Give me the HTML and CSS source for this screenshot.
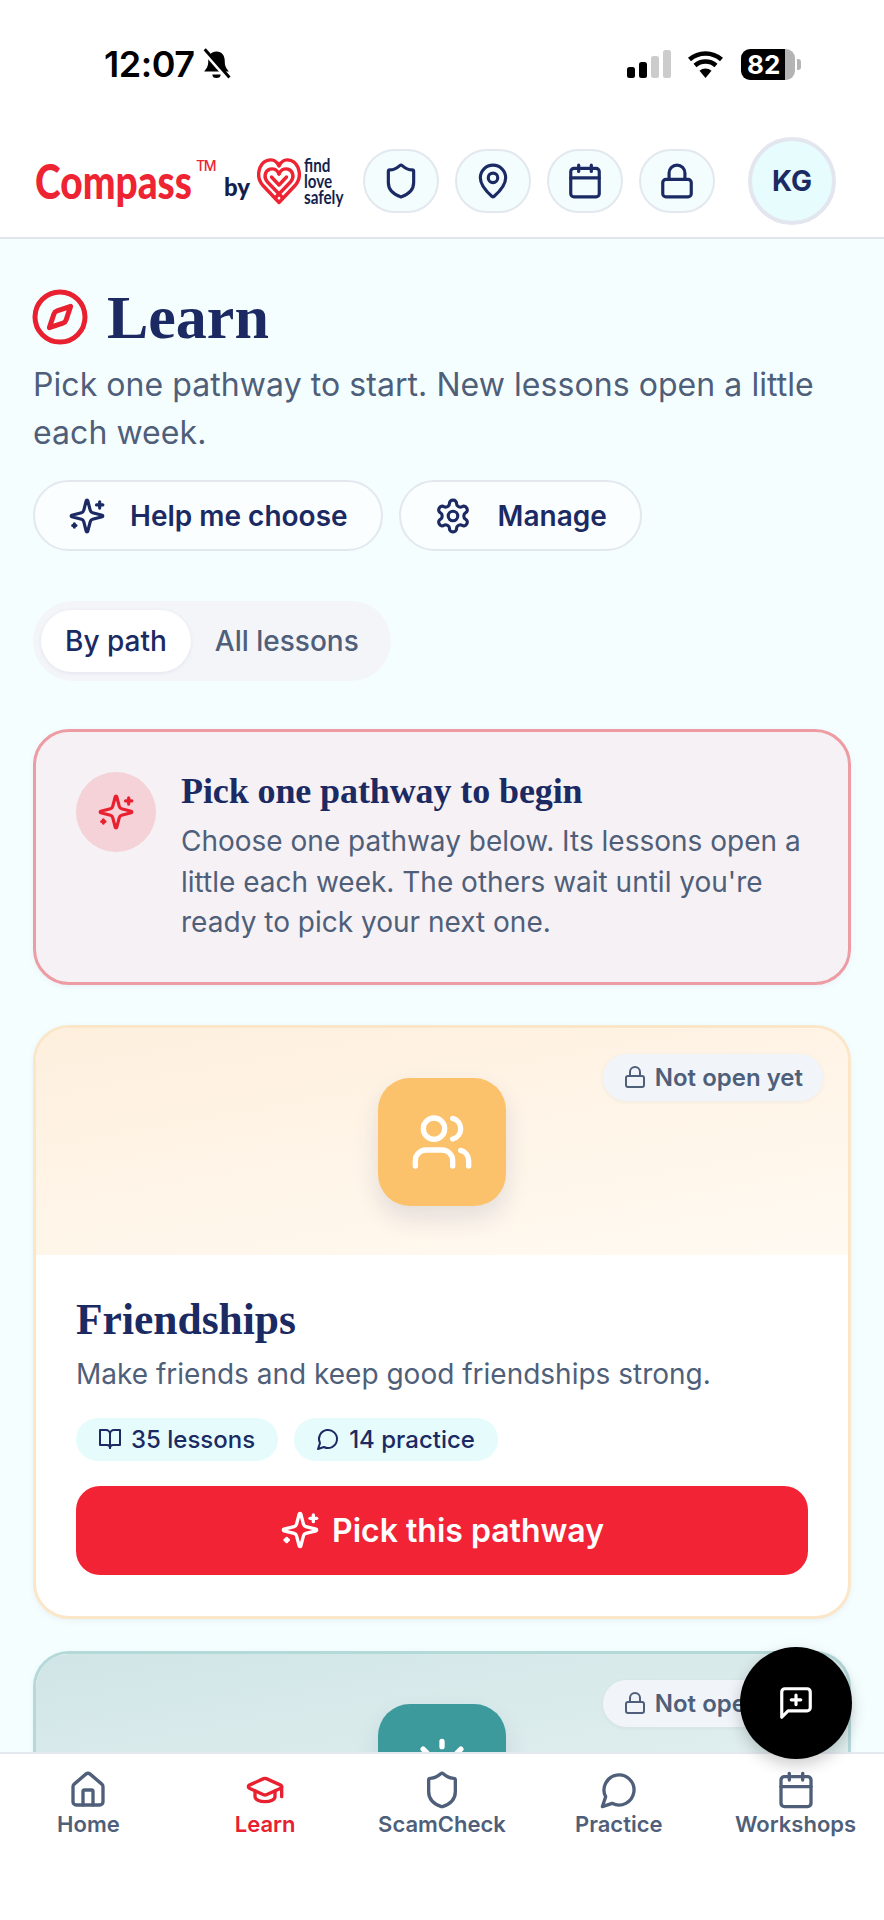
FILE: index.html
```html
<!DOCTYPE html>
<html lang="en">
<head>
    <meta charset="UTF-8">
    <meta name="viewport" content="width=device-width, initial-scale=1.0">
    <title>Compass - Learn</title>
    <link rel="stylesheet" href="styles.css">
</head>
<body>
    <!-- icon sprite -->
    <svg class="sprite" xmlns="http://www.w3.org/2000/svg">
        <symbol id="i-shield" viewBox="0 0 24 24"><path d="M20 13c0 5-3.5 7.5-7.66 8.95a1 1 0 0 1-.67-.01C7.5 20.5 4 18 4 13V6a1 1 0 0 1 1-1c2 0 4.5-1.2 6.24-2.72a1.17 1.17 0 0 1 1.52 0C14.51 3.81 17 5 19 5a1 1 0 0 1 1 1z"/></symbol>
        <symbol id="i-pin" viewBox="0 0 24 24"><path d="M20 10c0 4.993-5.539 10.193-7.399 11.799a1 1 0 0 1-1.202 0C9.539 20.193 4 14.993 4 10a8 8 0 0 1 16 0"/><circle cx="12" cy="10" r="3"/></symbol>
        <symbol id="i-calendar" viewBox="0 0 24 24"><path d="M8 2v4"/><path d="M16 2v4"/><rect x="3" y="4" width="18" height="18" rx="2"/><path d="M3 10h18"/></symbol>
        <symbol id="i-lock" viewBox="0 0 24 24"><rect x="3" y="11" width="18" height="11" rx="2"/><path d="M7 11V7a5 5 0 0 1 10 0v4"/></symbol>
        <symbol id="i-sparkles" viewBox="0 0 24 24"><path d="M9.937 15.5A2 2 0 0 0 8.5 14.063l-6.135-1.582a.5.5 0 0 1 0-.962L8.5 9.936A2 2 0 0 0 9.937 8.5l1.582-6.135a.5.5 0 0 1 .963 0L14.063 8.5A2 2 0 0 0 15.5 9.937l6.135 1.581a.5.5 0 0 1 0 .964L15.5 14.063a2 2 0 0 0-1.437 1.437l-1.582 6.135a.5.5 0 0 1-.963 0z"/><path d="M20 3v4"/><path d="M22 5h-4"/><path d="M4 17v2"/><path d="M5 18H3"/></symbol>
        <symbol id="i-message" viewBox="0 0 24 24"><path d="M7.9 20A9 9 0 1 0 4 16.1L2 22Z"/></symbol>
    </svg>

    <div class="phone">
        <div class="status-bar">
            <div class="status-left">
                <span class="time">12:07</span>
                <svg class="bell" viewBox="0 0 28 28">
                    <path d="M14 3c-4.500 0-7 3.500-7 8 0 4-1 6-3.500 9h21C22 17 21 15 21 11c0-4.500-2.500-8-7-8z"/>
                    <path d="M10.500 22.500a3.500 3 0 0 0 7 0z"/>
                    <path d="M3 2l21 24" class="bell-gap"/>
                    <path d="M4 1l21 24" class="bell-slash"/>
                </svg>
            </div>
            <div class="status-right">
                <div class="signal">
                    <span class="bar bar-1"></span>
                    <span class="bar bar-2"></span>
                    <span class="bar bar-3"></span>
                    <span class="bar bar-4"></span>
                </div>
                <svg class="wifi" viewBox="0 0 37 28">
                    <path d="M18.500 28l-6-7.200a9 9 0 0 1 12 0z"/>
                    <path d="M2.500 9.500a24 24 0 0 1 32 0M8 15.500a16 16 0 0 1 21 0" class="wifi-arc"/>
                </svg>
                <div class="battery"><span>82</span></div>
            </div>
        </div>

        <header class="top-bar">
            <div class="logo">
                <span class="logo-name">Compass</span>
                <span class="logo-tm">TM</span>
                <span class="logo-by">by</span>
                <svg class="logo-heart" viewBox="0 0 44 48">
                    <path d="M22 45.500L5.500 28C-1 20.500 1 7 10 3.500 15.500 1.500 20 4.500 22 9c2-4.500 6.500-7.500 12-5.500 9 3.500 11 17 4.500 24.500z"/>
                    <path d="M22 17c-1.500-3.500-5-6-9-4.800C7.500 14 6.500 20.500 10.500 25L25 40"/>
                    <path d="M22 17c1.500-3.500 5-6 9-4.800 5.500 1.800 6.500 8.300 2.500 12.800L19 40"/>
                    <path d="M14.500 20l7.500 8 7.500-8"/>
                </svg>
                <span class="logo-tag">find<br>love<br>safely</span>
            </div>
            <div class="top-icons">
                <a class="icon-pill"><svg class="icon"><use href="#i-shield"/></svg></a>
                <a class="icon-pill"><svg class="icon"><use href="#i-pin"/></svg></a>
                <a class="icon-pill"><svg class="icon"><use href="#i-calendar"/></svg></a>
                <a class="icon-pill"><svg class="icon"><use href="#i-lock"/></svg></a>
            </div>
            <div class="avatar">KG</div>
        </header>

        <main class="content">
            <div class="page-title">
                <svg class="compass-icon" viewBox="0 0 24 24">
                    <circle cx="12" cy="12" r="10"/>
                    <path d="M16.240 7.760l-1.804 5.411a2 2 0 0 1-1.265 1.265L7.760 16.240l1.804-5.411a2 2 0 0 1 1.265-1.265z"/>
                </svg>
                <h1>Learn</h1>
            </div>
            <p class="intro">Pick one pathway to start. New lessons open a little each week.</p>

            <div class="action-row">
                <button class="action-btn"><svg class="icon"><use href="#i-sparkles"/></svg>Help me choose</button>
                <button class="action-btn manage">
                    <svg class="icon" viewBox="0 0 24 24">
                        <path d="M12.220 2h-.44a2 2 0 0 0-2 2v.18a2 2 0 0 1-1 1.730l-.43.25a2 2 0 0 1-2 0l-.15-.08a2 2 0 0 0-2.730.73l-.22.38a2 2 0 0 0 .73 2.730l.15.1a2 2 0 0 1 1 1.720v.51a2 2 0 0 1-1 1.740l-.15.09a2 2 0 0 0-.73 2.730l.22.38a2 2 0 0 0 2.730.73l.15-.08a2 2 0 0 1 2 0l.43.25a2 2 0 0 1 1 1.730V20a2 2 0 0 0 2 2h.44a2 2 0 0 0 2-2v-.18a2 2 0 0 1 1-1.730l.43-.25a2 2 0 0 1 2 0l.15.08a2 2 0 0 0 2.730-.73l.22-.39a2 2 0 0 0-.73-2.730l-.15-.08a2 2 0 0 1-1-1.740v-.5a2 2 0 0 1 1-1.740l.15-.09a2 2 0 0 0 .73-2.730l-.22-.38a2 2 0 0 0-2.730-.73l-.15.08a2 2 0 0 1-2 0l-.43-.25a2 2 0 0 1-1-1.730V4a2 2 0 0 0-2-2z"/>
                        <circle cx="12" cy="12" r="3"/>
                    </svg>Manage
                </button>
            </div>

            <div class="view-tabs">
                <span class="tab active">By path</span>
                <span class="tab">All lessons</span>
            </div>

            <section class="notice">
                <div class="notice-icon"><svg class="icon"><use href="#i-sparkles"/></svg></div>
                <div>
                    <h3>Pick one pathway to begin</h3>
                    <p>Choose one pathway below. Its lessons open a little each week. The others wait until you're ready to pick your next one.</p>
                </div>
            </section>

            <section class="path-card friendships">
                <div class="path-hero">
                    <span class="lock-badge"><svg class="icon"><use href="#i-lock"/></svg>Not open yet</span>
                    <div class="path-icon">
                        <svg class="icon" viewBox="0 0 24 24">
                            <path d="M16 21v-2a4 4 0 0 0-4-4H6a4 4 0 0 0-4 4v2"/>
                            <circle cx="9" cy="7" r="4"/>
                            <path d="M22 21v-2a4 4 0 0 0-3-3.870"/>
                            <path d="M16 3.130a4 4 0 0 1 0 7.750"/>
                        </svg>
                    </div>
                </div>
                <div class="path-body">
                    <h2>Friendships</h2>
                    <p>Make friends and keep good friendships strong.</p>
                    <div class="chips">
                        <span class="chip">
                            <svg class="icon" viewBox="0 0 24 24">
                                <path d="M2 3h6a4 4 0 0 1 4 4v14a3 3 0 0 0-3-3H2z"/>
                                <path d="M22 3h-6a4 4 0 0 0-4 4v14a3 3 0 0 1 3-3h7z"/>
                            </svg>35 lessons
                        </span>
                        <span class="chip"><svg class="icon"><use href="#i-message"/></svg>14 practice</span>
                    </div>
                    <button class="pick-btn"><svg class="icon"><use href="#i-sparkles"/></svg>Pick this pathway</button>
                </div>
            </section>

            <section class="path-card wellbeing">
                <div class="path-hero">
                    <span class="lock-badge"><svg class="icon"><use href="#i-lock"/></svg>Not open yet</span>
                    <div class="path-icon">
                        <svg class="icon" viewBox="0 0 24 24">
                            <circle cx="12" cy="12" r="4"/>
                            <path d="M12 2v2M12 20v2M4.930 4.930l1.410 1.410M17.660 17.660l1.410 1.410M2 12h2M20 12h2M6.340 17.660l-1.410 1.410M19.070 4.930l-1.410 1.410"/>
                        </svg>
                    </div>
                </div>
            </section>
        </main>

        <button class="fab">
            <svg class="icon" viewBox="0 0 24 24">
                <path d="M21 15a2 2 0 0 1-2 2H7l-4 4V5a2 2 0 0 1 2-2h14a2 2 0 0 1 2 2z"/>
                <path d="M12 7v6"/>
                <path d="M9 10h6"/>
            </svg>
        </button>

        <nav class="bottom-nav">
            <a class="nav-item">
                <svg class="icon" viewBox="0 0 24 24">
                    <path d="M15 21v-8a1 1 0 0 0-1-1h-4a1 1 0 0 0-1 1v8"/>
                    <path d="M3 10a2 2 0 0 1 .709-1.528l7-5.999a2 2 0 0 1 2.582 0l7 5.999A2 2 0 0 1 21 10v9a2 2 0 0 1-2 2H5a2 2 0 0 1-2-2z"/>
                </svg>
                Home
            </a>
            <a class="nav-item current">
                <svg class="icon" viewBox="0 0 24 24">
                    <path d="M21.420 10.922a1 1 0 0 0-.019-1.838L12.830 5.180a2 2 0 0 0-1.660 0L2.600 9.080a1 1 0 0 0 0 1.832l8.570 3.908a2 2 0 0 0 1.660 0z"/>
                    <path d="M22 10v6"/>
                    <path d="M6 12.500V16a6 3 0 0 0 12 0v-3.500"/>
                </svg>
                Learn
            </a>
            <a class="nav-item"><svg class="icon"><use href="#i-shield"/></svg>ScamCheck</a>
            <a class="nav-item"><svg class="icon"><use href="#i-message"/></svg>Practice</a>
            <a class="nav-item"><svg class="icon"><use href="#i-calendar"/></svg>Workshops</a>
        </nav>
    </div>
</body>
</html>
```

FILE: styles.css
```css
* {
    box-sizing: border-box;
}
body {
    margin: 0;
    font-family: Inter, "Liberation Sans", sans-serif;
    color: #1b2a63;
    background: #fff;
}
h1, h2, h3, p {
    margin: 0;
}
button {
    font-family: inherit;
    cursor: pointer;
}
.sprite {
    display: none;
}
.icon {
    width: 38px;
    height: 38px;
    flex: none;
    fill: none;
    stroke: currentColor;
    stroke-width: 2;
    stroke-linecap: round;
    stroke-linejoin: round;
}
.phone {
    position: relative;
    display: flex;
    flex-direction: column;
    width: 884px;
    height: 1920px;
    overflow: hidden;
    background: #fff;
}

/* status bar */
.status-bar {
    flex: none;
    display: flex;
    justify-content: space-between;
    align-items: center;
    height: 126px;
    padding: 2px 89px 0 104px;
    color: #000;
}
.status-left, .status-right {
    display: flex;
    align-items: center;
}
.time {
    font-size: 36px;
    font-weight: 600;
    letter-spacing: -0.5px;
}
.bell {
    width: 33px;
    height: 33px;
    margin-left: 6px;
}
.bell-gap {
    stroke: #fff;
    stroke-width: 4;
}
.bell-slash {
    stroke: #000;
    stroke-width: 2.5;
}
.signal {
    display: flex;
    align-items: flex-end;
    gap: 4px;
    height: 28px;
}
.bar {
    width: 8px;
    border-radius: 2.5px;
    background: #000;
}
.bar-1 { height: 11px; }
.bar-2 { height: 16px; }
.bar-3 { height: 22px; background: #ccc; }
.bar-4 { height: 28px; background: #ccc; }
.wifi {
    width: 37px;
    height: 28px;
    margin-left: 16px;
}
.wifi-arc {
    fill: none;
    stroke: #000;
    stroke-width: 4.5;
}
.battery {
    position: relative;
    width: 54px;
    height: 31px;
    margin-left: 17px;
    border-radius: 9px;
    background: linear-gradient(90deg, #000 82%, #b4b4b4 82%);
    color: #fff;
    font-size: 26px;
    font-weight: 700;
    line-height: 31px;
    padding-left: 6px;
}
.battery::after {
    content: "";
    position: absolute;
    right: -6px;
    top: 10px;
    width: 4px;
    height: 11px;
    border-radius: 0 3px 3px 0;
    background: #b4b4b4;
}

/* header */
.top-bar {
    flex: none;
    display: flex;
    align-items: center;
    height: 113px;
    padding: 0 48px 2px 35px;
    border-bottom: 2px solid #dfe6ec;
}
.logo {
    flex: 1;
    display: flex;
    align-items: center;
    height: 60px;
}
.logo-name {
    width: 157px;
    font-family: Lato, sans-serif;
    font-size: 48px;
    font-weight: 900;
    color: #ee2433;
    transform: scaleX(0.81);
    transform-origin: left center;
    white-space: nowrap;
}
.logo-tm {
    align-self: flex-start;
    width: 28px;
    margin: 6px 0 0 4px;
    font-size: 14px;
    font-weight: 500;
    letter-spacing: -1.5px;
    color: #ee2433;
}
.logo-by {
    width: 28px;
    margin-top: 12px;
    font-family: Lato, sans-serif;
    font-size: 24px;
    font-weight: 900;
    color: #141f4d;
}
.logo-heart {
    width: 44px;
    height: 48px;
    margin: 0 3px 0 5px;
    fill: none;
    stroke: #ee2433;
    stroke-width: 3.4;
    stroke-linejoin: round;
    stroke-linecap: round;
}
.logo-tag {
    font-family: Lato, sans-serif;
    font-size: 19px;
    font-weight: 700;
    line-height: 16px;
    color: #141f4d;
    transform: scaleX(0.8);
    transform-origin: left center;
}
.top-icons {
    display: flex;
    gap: 16px;
}
.icon-pill {
    display: flex;
    align-items: center;
    justify-content: center;
    width: 76px;
    height: 64px;
    border: 2px solid #e3e8ef;
    border-radius: 32px;
    background: #f3fdfe;
}
.avatar {
    display: flex;
    align-items: center;
    justify-content: center;
    width: 88px;
    height: 88px;
    margin-left: 33px;
    border: 4px solid #e3e6ee;
    border-radius: 50%;
    background: #e6fcfd;
    font-size: 28px;
    font-weight: 700;
}

/* page content */
.content {
    flex: 1;
    min-height: 0;
    overflow: hidden;
    padding: 42px 33px 0;
    background: #f5feff;
}
.page-title {
    display: flex;
    align-items: center;
    gap: 17px;
}
.compass-icon {
    width: 60px;
    height: 60px;
    margin-left: -3px;
    fill: none;
    stroke: #e8202f;
    stroke-width: 2;
    stroke-linejoin: round;
}
h1 {
    font-family: "Liberation Serif", serif;
    font-size: 62px;
    font-weight: 700;
    line-height: 72px;
}
.intro {
    margin-top: 8px;
    font-size: 32px;
    line-height: 48px;
    letter-spacing: 0.06px;
    color: #4f5f7a;
}
.action-row {
    display: flex;
    gap: 16px;
    margin-top: 23px;
}
.action-btn {
    display: flex;
    align-items: center;
    gap: 24px;
    height: 71px;
    padding: 0 33px;
    border: 2px solid #e3e8ef;
    border-radius: 36px;
    background: #fafeff;
    color: #1b2a63;
    font-size: 28px;
    font-weight: 600;
}
.action-btn.manage {
    gap: 26px;
}
.view-tabs {
    display: inline-flex;
    margin-top: 50px;
    padding: 9px 8px;
    border-radius: 40px;
    background: #f3f5f9;
    vertical-align: top;
}
.tab {
    height: 62px;
    padding: 0 24px;
    border-radius: 31px;
    font-size: 28px;
    font-weight: 500;
    line-height: 62px;
    color: #4f5f7a;
}
.tab.active {
    background: #fff;
    color: #1b2a63;
    box-shadow: 0 1px 4px rgba(27, 42, 99, 0.08);
}
.notice {
    display: flex;
    gap: 25px;
    margin-top: 48px;
    padding: 40px 40px 39px;
    border: 3px solid #ee9ca4;
    border-radius: 36px;
    background: #f6f1f4;
    box-shadow: 0 2px 6px rgba(27, 42, 99, 0.06);
}
.notice-icon {
    flex: none;
    display: flex;
    align-items: center;
    justify-content: center;
    width: 80px;
    height: 80px;
    border-radius: 50%;
    background: #f4d2d7;
    color: #e8202f;
}
.notice h3 {
    margin-bottom: 11px;
    font-family: "Liberation Serif", serif;
    font-size: 36px;
    font-weight: 700;
    line-height: 38px;
    letter-spacing: -0.1px;
}
.notice p {
    font-size: 28px;
    line-height: 40.500px;
    color: #4f5f7a;
}
.path-card {
    margin-top: 40px;
    border: 3px solid;
    border-radius: 36px;
    overflow: hidden;
    background: #fff;
    box-shadow: 0 2px 6px rgba(27, 42, 99, 0.06);
}
.path-hero {
    position: relative;
    display: flex;
    justify-content: center;
    padding: 50px 0 49px;
}
.path-icon {
    display: flex;
    align-items: center;
    justify-content: center;
    width: 128px;
    height: 128px;
    border-radius: 32px;
    color: #fff;
    box-shadow: 0 12px 24px rgba(27, 42, 99, 0.12);
}
.path-icon .icon {
    width: 64px;
    height: 64px;
}
.lock-badge {
    position: absolute;
    top: 26px;
    right: 25px;
    display: flex;
    align-items: center;
    gap: 8px;
    height: 47px;
    padding: 0 20px;
    border-radius: 24px;
    background: #f1f5f9;
    color: #4f5f7a;
    font-size: 24px;
    font-weight: 600;
    box-shadow: 0 1px 4px rgba(27, 42, 99, 0.06);
}
.lock-badge .icon {
    width: 24px;
    height: 24px;
}
.friendships {
    border-color: #fbe6c8;
}
.friendships .path-hero {
    background: linear-gradient(170deg, #feefdd, #fffaf2);
}
.friendships .path-icon {
    background: #fbc26b;
}
.wellbeing {
    margin-top: 32px;
    border-color: #b5d8d8;
}
.wellbeing .path-hero {
    background: linear-gradient(170deg, #d1e5e6, #e8f4f4);
}
.wellbeing .path-icon {
    background: #3c9a9c;
}
.path-body {
    padding: 39px 40px 41px;
}
.path-body h2 {
    font-family: "Liberation Serif", serif;
    font-size: 43.500px;
    font-weight: 700;
    line-height: 50px;
}
.path-body p {
    margin-top: 10px;
    font-size: 28px;
    line-height: 40px;
    color: #4f5f7a;
}
.chips {
    display: flex;
    gap: 16px;
    margin-top: 24px;
}
.chip {
    display: flex;
    align-items: center;
    gap: 9px;
    height: 43px;
    padding: 0 23px 0 22px;
    border-radius: 22px;
    background: #e6fbfc;
    font-size: 24px;
    font-weight: 500;
}
.chip .icon {
    width: 24px;
    height: 24px;
}
.pick-btn {
    display: flex;
    align-items: center;
    justify-content: center;
    gap: 12px;
    width: 100%;
    height: 89px;
    margin-top: 25px;
    border: none;
    border-radius: 24px;
    background: #f22335;
    color: #fff;
    font-size: 32px;
    font-weight: 600;
}
.pick-btn .icon {
    width: 40px;
    height: 40px;
}

/* floating button and tabs */
.fab {
    position: absolute;
    right: 32px;
    bottom: 161px;
    display: flex;
    align-items: center;
    justify-content: center;
    width: 112px;
    height: 112px;
    border: none;
    border-radius: 50%;
    background: #000;
    color: #fff;
    box-shadow: 0 6px 16px rgba(0, 0, 0, 0.2);
}
.bottom-nav {
    flex: none;
    display: grid;
    grid-template-columns: repeat(5, 1fr);
    height: 168px;
    padding-top: 16px;
    border-top: 2px solid #e4e8ef;
    background: #fff;
}
.nav-item {
    display: flex;
    flex-direction: column;
    align-items: center;
    font-size: 22px;
    font-weight: 600;
    line-height: 28px;
    color: #4f5f7a;
    white-space: nowrap;
}
.nav-item .icon {
    width: 40px;
    height: 40px;
}
.nav-item.current {
    color: #e8202f;
}
```
